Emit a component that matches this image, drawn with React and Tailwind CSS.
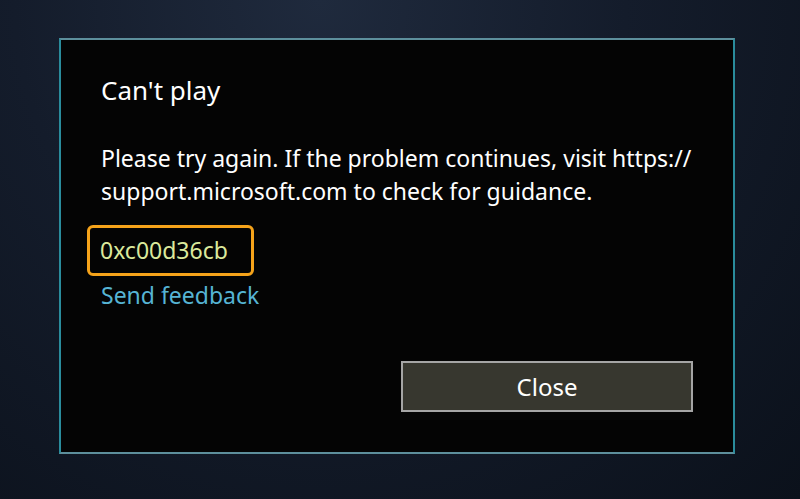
import React from 'react';

const App = () => {
    return (
        <div className="w-[800px] h-[499px] overflow-hidden bg-[radial-gradient(ellipse_at_40%_0%,#1f2a3d_0%,#141c2b_45%,#0b111b_100%)] pt-[38px] pl-[59px] font-['Noto_Sans',sans-serif]">
            {/* Dialog */}
            <div className="w-[676px] h-[416px] bg-[#040404] border-2 border-x-[#2a8c9c] border-y-[#5d8f9c] pl-[40px] pr-[20px] flex flex-col">
                <h1 className="mt-[32px] text-[26px] leading-[36px] text-white">Can't play</h1>

                <p className="mt-[34px] text-[23px] leading-[33px] text-white w-[620px]">
                    Please try again. If the problem continues, visit https://
                    <br />
                    support.microsoft.com to check for guidance.
                </p>

                {/* Error code */}
                <div className="mt-[17px] -ml-[14px] w-[167px] h-[51px] rounded-[6px] border-[3px] border-[#f5a31a] flex items-center pl-[10px]">
                    <span className="text-[23px] text-[#dbe99c]">0xc00d36cb</span>
                </div>

                <a className="mt-[3px] text-[23px] leading-[32px] text-[#56b4d4]">Send feedback</a>

                <div className="flex-1" />

                {/* Close button */}
                <div className="flex justify-end mb-[40px] mr-[20px]">
                    <button className="w-[292px] h-[51px] bg-[#37372f] border-2 border-[#a5a5a5] text-white text-[24px]">
                        Close
                    </button>
                </div>
            </div>
        </div>
    );
};

export default App;
